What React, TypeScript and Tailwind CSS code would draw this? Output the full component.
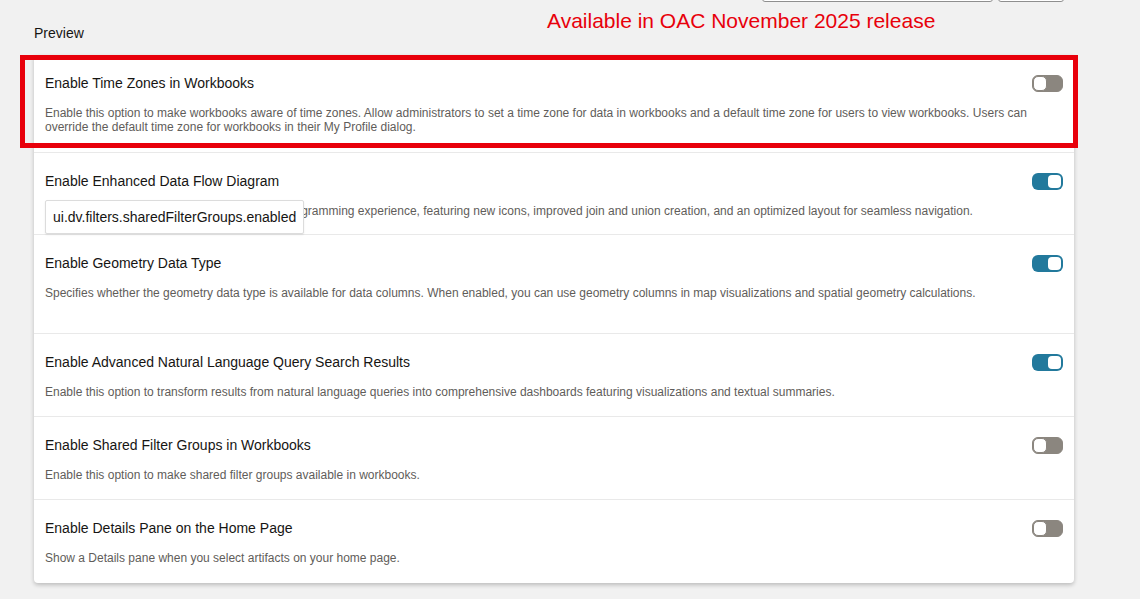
import React from "react";

type Row = {
  title: string;
  desc: string;
  on: boolean;
  pb: string;
  tooltip?: string;
};

const rows: Row[] = [
  {
    title: "Enable Time Zones in Workbooks",
    desc: "Enable this option to make workbooks aware of time zones. Allow administrators to set a time zone for data in workbooks and a default time zone for users to view workbooks. Users can override the default time zone for workbooks in their My Profile dialog.",
    on: false,
    pb: "pb-[18px]",
  },
  {
    title: "Enable Enhanced Data Flow Diagram",
    desc: "Enable this option for an enhanced data flow diagramming experience, featuring new icons, improved join and union creation, and an optimized layout for seamless navigation.",
    on: true,
    pb: "pb-[16px]",
    tooltip: "ui.dv.filters.sharedFilterGroups.enabled",
  },
  {
    title: "Enable Geometry Data Type",
    desc: "Specifies whether the geometry data type is available for data columns. When enabled, you can use geometry columns in map visualizations and spatial geometry calculations.",
    on: true,
    pb: "pb-[33px]",
  },
  {
    title: "Enable Advanced Natural Language Query Search Results",
    desc: "Enable this option to transform results from natural language queries into comprehensive dashboards featuring visualizations and textual summaries.",
    on: true,
    pb: "pb-[17px]",
  },
  {
    title: "Enable Shared Filter Groups in Workbooks",
    desc: "Enable this option to make shared filter groups available in workbooks.",
    on: false,
    pb: "pb-[17px]",
  },
  {
    title: "Enable Details Pane on the Home Page",
    desc: "Show a Details pane when you select artifacts on your home page.",
    on: false,
    pb: "pb-[18px]",
  },
];

function Toggle({ on }: { on: boolean }) {
  return on ? (
    <div className="w-[31px] h-[17px] rounded-[6px] bg-[#22799c] flex items-center justify-end pr-[2px] shrink-0">
      <div className="w-[13px] h-[13px] rounded-[4px] bg-white" />
    </div>
  ) : (
    <div className="w-[31px] h-[17px] rounded-[6px] bg-[#8b867f] border border-[#8b867f] flex items-center justify-start shrink-0">
      <div className="w-[14px] h-[15px] rounded-[5px] bg-white border border-[#8b867f]" />
    </div>
  );
}

export default function App() {
  return (
    <div
      className="w-[1140px] h-[599px] bg-[#f1f1f1] relative overflow-hidden"
      style={{ fontFamily: '"Liberation Sans", Arial, sans-serif' }}
    >
      {/* top cut-off inputs */}
      <div className="h-[2px] overflow-hidden flex">
        <div className="ml-[762px] w-[231px] h-[30px] -mt-[28px] border border-[#8f8f8f] rounded-[3px] bg-white" />
        <div className="ml-[5px] w-[66px] h-[30px] -mt-[28px] border border-[#8f8f8f] rounded-[3px] bg-white" />
      </div>

      {/* annotation */}
      <div className="absolute left-[547px] top-[9px] text-[21px] leading-[24px] text-[#e8000b]">
        Available in OAC November 2025 release
      </div>

      <div className="pl-[34px] pt-[23px] h-[53px] text-[14px] leading-[16px] text-[#161513]">
        Preview
      </div>

      <div className="ml-[34px] w-[1040px] bg-white rounded-b-[4px] shadow-[0_2px_4px_rgba(0,0,0,0.22)]">
        {rows.map((r, i) => (
          <div
            key={i}
            className={
              "relative px-[11px] pt-[20px] " +
              r.pb +
              (i < rows.length - 1 ? " border-b border-[#e9e9e9]" : "")
            }
          >
            <div className="flex items-center justify-between h-[16px]">
              <div className="text-[14px] leading-[16px] text-[#161513]">{r.title}</div>
              <Toggle on={r.on} />
            </div>
            <div className="mt-[15px] text-[12px] leading-[14px] text-[#5f5d5a] pr-[30px]">
              {r.desc}
            </div>
            {r.tooltip && (
              <div className="absolute left-[11px] top-[47px] h-[34px] px-[7px] flex items-center bg-white border border-[#dcdcdc] rounded-[2px] shadow-[0_1px_2px_rgba(0,0,0,0.08)] text-[14px] text-[#161513]">
                {r.tooltip}
              </div>
            )}
          </div>
        ))}
      </div>

      {/* red highlight box */}
      <div className="absolute left-[20px] top-[55px] w-[1058px] h-[93px] border-[5px] border-[#e8000b]" />
    </div>
  );
}
